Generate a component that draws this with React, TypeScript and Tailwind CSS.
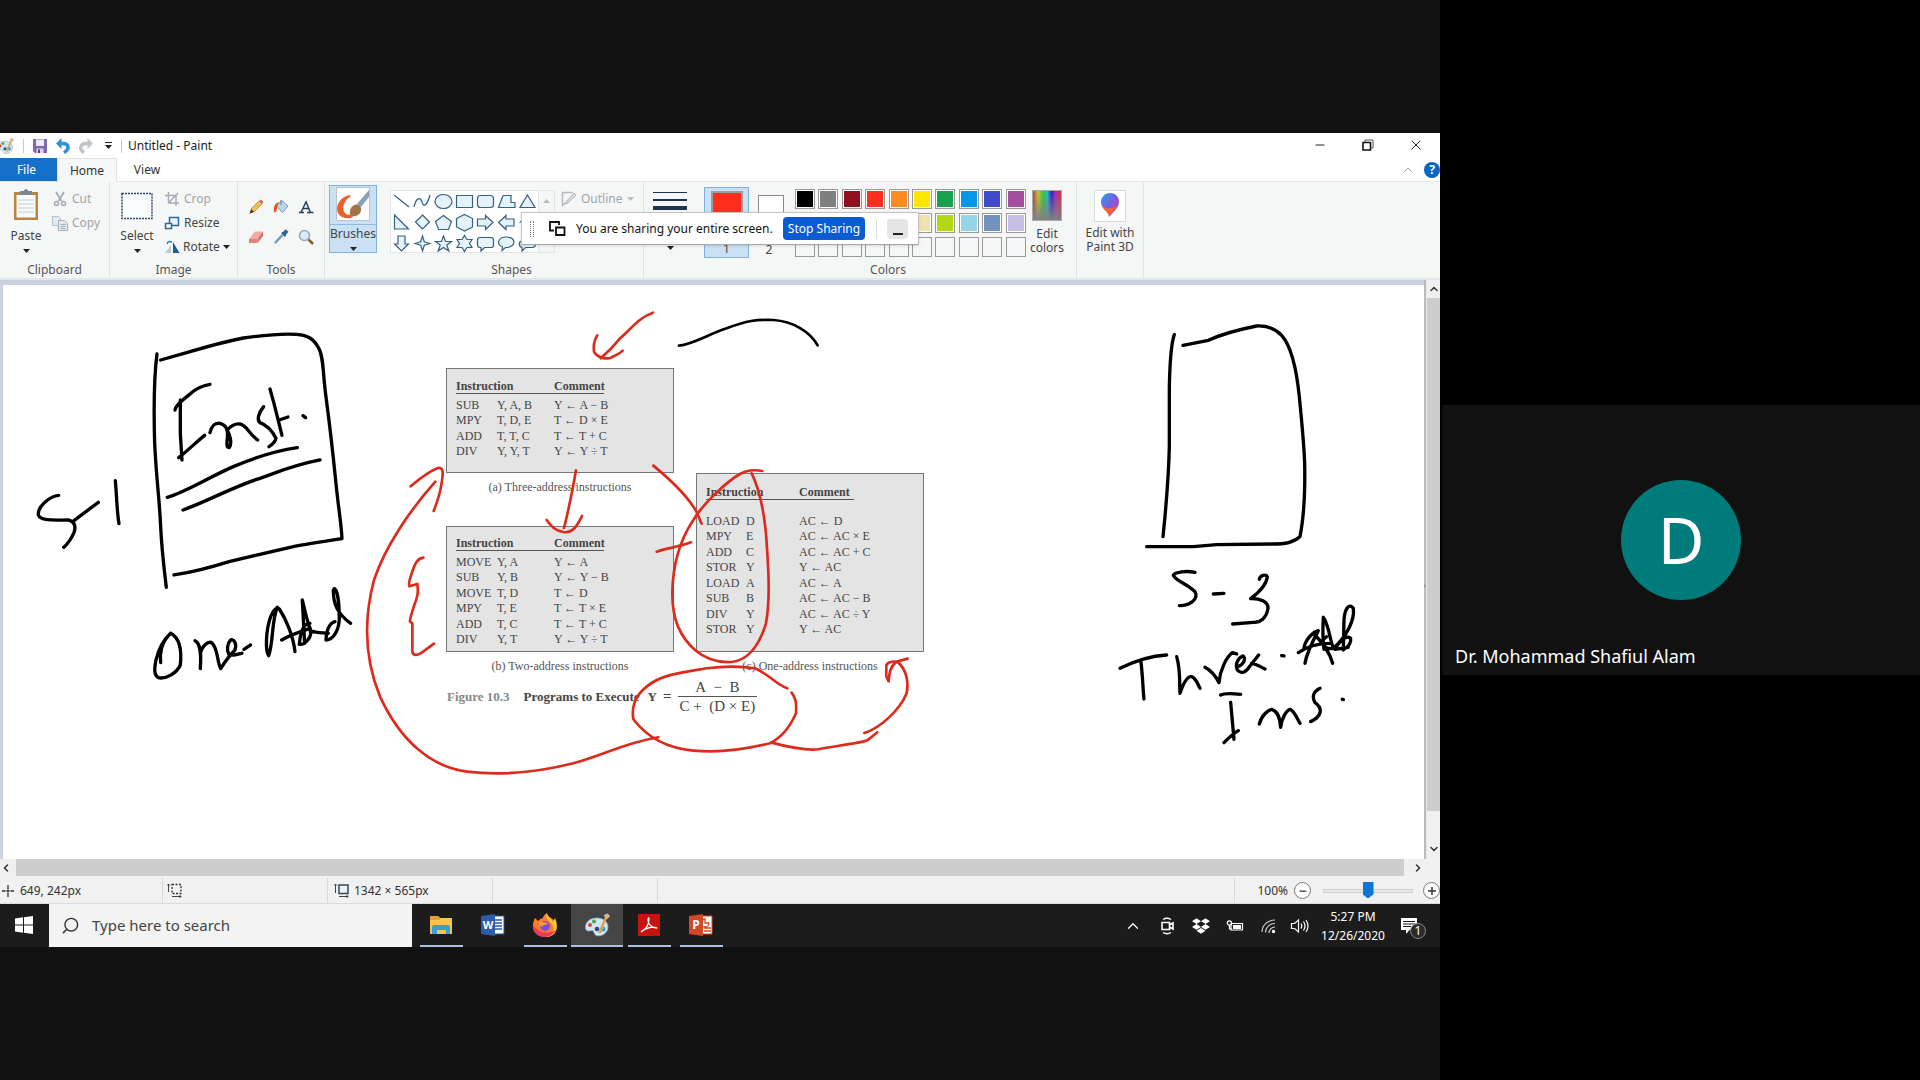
import type { ReactNode } from "react";
import { Minus, X, ChevronUp, ChevronDown, ChevronLeft, ChevronRight, Search } from "lucide-react";
import { FaDropbox } from "react-icons/fa";

/* ---------- small shared pieces ---------- */

const Caret = ({ className = "" }: { className?: string }) => (
  <svg viewBox="0 0 7 4" className={`h-1 w-[7px] ${className}`} aria-hidden="true">
    <path d="M0 0H7L3.5 4Z" fill="currentColor" />
  </svg>
);

const Icon = ({ size = "size-4", box = "0 0 16 16", children }: { size?: string; box?: string; children: ReactNode }) => (
  <svg viewBox={box} className={`${size} shrink-0`} fill="none" aria-hidden="true">
    {children}
  </svg>
);

const Palette = ({ size }: { size: string }) => (
  <Icon size={size} box="0 0 26 26">
    <path d="M13 6C5 6 1 11 1.500 16c.5 4 4 3 6 2.500 2.500-.5 2 2.500 4 4.500 2.500 2 9 .5 11.500-4C26 13 22 6 13 6Z" fill="#cfe6f3" stroke="#7fb0cf" strokeWidth=".8" />
    <circle cx="6" cy="13" r="2" fill="#d8433b" />
    <circle cx="10" cy="9.500" r="2" fill="#49a54d" />
    <circle cx="13" cy="17" r="2.300" fill="#2b4f7a" />
    <circle cx="19" cy="17" r="2.500" fill="#3aa0dc" />
    <path d="M14 21 21 5l2 1-6 15Z" fill="#e0a04a" />
    <path d="M19.500 3 24 1.500l2 3-3.500 3Z" fill="#d9b58a" />
  </Icon>
);

/* ---------- title bar ---------- */

function TitleBar() {
  return (
    <header className="flex h-[25px] items-center bg-white text-[#222]">
      <div className="w-[15px] overflow-hidden">
        <div className="-ml-1"><Palette size="size-[18px]" /></div>
      </div>
      <span className="ml-2 h-3.5 w-px bg-[#c8c8c8]" />
      <div className="ml-2 flex items-center gap-[7px]">
        <button aria-label="Save">
          <Icon>
            <path d="M1 1h14v14H3l-2-2Z" fill="#8068b0" />
            <path d="M4 1.500h8V8H4Z" fill="#eceaf5" />
            <path d="M4.500 10.500h7V15h-7Z" fill="#d9d6ea" />
            <path d="M6 11.500h2V15H6Z" fill="#51407c" />
          </Icon>
        </button>
        <button aria-label="Undo">
          <Icon>
            <path d="M3 5.500h5c6 0 7 6 1 9" stroke="#2a93dc" strokeWidth="3.500" />
            <path d="M1 5.500 6.500 0v11Z" fill="#2a93dc" />
          </Icon>
        </button>
        <button aria-label="Redo">
          <Icon>
            <path d="M13 5.500H8c-6 0-7 6-2 9" stroke="#bfc4c9" strokeWidth="3.500" />
            <path d="M15 5.500 9.500 0v11Z" fill="#bfc4c9" />
          </Icon>
        </button>
        <button aria-label="Customize Quick Access Toolbar" className="flex w-3.5 flex-col items-center gap-0.5">
          <span className="h-px w-[7px] bg-[#222]" />
          <Caret />
        </button>
      </div>
      <span className="ml-1.5 h-3.5 w-px bg-[#c8c8c8]" />
      <h1 className="ml-1.5 text-xs">Untitled - Paint</h1>
      <div className="ml-auto flex items-center pb-0.5">
        <button aria-label="Minimize" className="flex w-12 justify-center"><Minus className="size-3.5" /></button>
        <button aria-label="Restore" className="flex w-12 justify-center">
          <Icon size="size-3" box="0 0 12 12">
            <path d="M3 3V1h8v8H9.500" stroke="#555" />
            <path d="M1 3.500h7.500v7.500H1Z" stroke="#111" strokeWidth="1.600" />
          </Icon>
        </button>
        <button aria-label="Close" className="flex w-12 justify-center"><X className="size-4" strokeWidth={1.5} /></button>
      </div>
    </header>
  );
}

function Tabs() {
  return (
    <nav className="flex h-6 items-stretch border-b border-[#e6e8ea] bg-white text-xs text-[#333]" aria-label="Ribbon tabs">
      <button className="w-[57px] bg-[#1470c8] pr-1 text-white">File</button>
      <button className="-mb-px w-[60px] border-x border-t border-[#e0e3e6] bg-[#f6f7f8]">Home</button>
      <button className="w-[60px]">View</button>
      <div className="ml-auto flex items-center gap-2">
        <button aria-label="Minimize the Ribbon"><ChevronUp className="size-4 text-[#aaa]" strokeWidth={1.5} /></button>
        <button aria-label="Help" className="flex size-4 items-center justify-center rounded-full bg-[#0a66c2] text-xs font-bold leading-none text-white">?</button>
      </div>
    </nav>
  );
}

/* ---------- ribbon ---------- */

const Group = ({ label, width, children, line = true }: { label: string; width: string; children: ReactNode; line?: boolean }) => (
  <section className={`flex shrink-0 flex-col ${width} ${line ? "border-r border-[#e0e3e6]" : ""}`}>
    <div className="flex flex-1 pt-[5px]">{children}</div>
    <div className="h-4 text-center text-xs leading-4 text-[#555]">{label}</div>
  </section>
);

const toolIcons: { name: string; art: ReactNode }[] = [
  { name: "Pencil", art: <><path d="m3 10 8-8 3 3-8 8Z" fill="#f0bf55" stroke="#a97a2a" strokeWidth=".7" /><path d="m3 10 3 3-4.500 1.800Z" fill="#4b3a26" /><path d="m11 2 2-1.500 2.500 2.500L14 5Z" fill="#d96a62" /></> },
  { name: "Fill with color", art: <><path d="m3.500 7 5-5.500L15 7l-5.500 6.500Z" fill="#b9d6ea" stroke="#5a86a8" strokeWidth=".8" /><path d="M8 6V1" stroke="#5a86a8" /><path d="M6 3.500C2 4 .5 7 1 13c2 1 3-1 3-5Z" fill="#e2532c" /></> },
  { name: "Text", art: <path d="M1 13.500h5M9 13.500h6.500M3.200 13 8.200 2.500M7.700 2l4.800 11.500M5 9.500h5.500" stroke="#23405f" strokeWidth="1.500" /> },
  { name: "Eraser", art: <><path d="m1 10 6-7.500h8L9.500 10Z" fill="#f1a9a0" /><path d="M1 10h8.500v4H1Z" fill="#e0857d" /><path d="m9.500 10 5.500-7.500V7l-5.500 7Z" fill="#cf6f69" /></> },
  { name: "Color picker", art: <><path d="m2 14 7.500-8" stroke="#6c9cc4" strokeWidth="2.500" /><path d="M9 3.500 12.500 7" stroke="#1c3f66" strokeWidth="2" /><path d="m10.500 5.500 3.500-4" stroke="#2468a6" strokeWidth="4" /></> },
  { name: "Magnifier", art: <><circle cx="6.500" cy="6.500" r="5" fill="#dcecf7" stroke="#93a9ba" strokeWidth="1.500" /><path d="m10.500 10.500 4.500 4.500" stroke="#8a5a2b" strokeWidth="2.500" /></> },
];

const shapes: { name: string; d: string }[] = [
  { name: "Line", d: "M3 4 18 16" },
  { name: "Curve", d: "M2 16C4 6 9 6 10 11s5 5 8-7" },
  { name: "Oval", d: "M2 10.500a8.500 7 0 1 0 17 0a8.500 7 0 1 0-17 0" },
  { name: "Rectangle", d: "M2.500 4.500h16v12h-16Z" },
  { name: "Rounded rectangle", d: "M5.500 4.500h10q3 0 3 3v6q0 3-3 3h-10q-3 0-3-3v-6q0-3 3-3Z" },
  { name: "Polygon", d: "M7 4.500h8v7h4v5H2.500L7 4.500" },
  { name: "Triangle", d: "M10.500 4 18 16.500H3Z" },
  { name: "Right triangle", d: "M3.500 3v14h14Z" },
  { name: "Diamond", d: "m10.500 3 7 7-7 7-7-7Z" },
  { name: "Pentagon", d: "m10.500 3.500 8 6-3 8h-10l-3-8Z" },
  { name: "Hexagon", d: "m10.500 2.500 8 4v8.500l-8 4-8-4V6.500Z" },
  { name: "Right arrow", d: "M2.500 7h8V3.500l7.500 7-7.500 7V14h-8Z" },
  { name: "Left arrow", d: "M18 7h-8V3.500l-7.500 7 7.500 7V14h8Z" },
  { name: "Up arrow", d: "M7 18v-8H3.500l7-7.500 7 7.500H14v8Z" },
  { name: "Down arrow", d: "M7 3v8H3.500l7 7 7-7H14V3Z" },
  { name: "Four-point star", d: "m10.500 3 1.800 5.700 5.700 1.800-5.700 1.800-1.800 5.700-1.800-5.700L3 10.500l5.700-1.800Z" },
  { name: "Five-point star", d: "m10.500 3 2 5.500h6l-4.700 3.500 2 6-5.300-3.500L5.200 18l2-6L2.500 8.500h6Z" },
  { name: "Six-point star", d: "m10.500 2.500 2.500 4h5l-2.500 4 2.500 4h-5l-2.500 4-2.500-4H3l2.500-4L3 6.500h5Z" },
  { name: "Rounded callout", d: "M5 4.500h11q2.500 0 2.500 2.500v5q0 2.500-2.500 2.500H9.500L6 18v-3.500H5Q2.500 14.500 2.500 12V7Q2.500 4.500 5 4.500Z" },
  { name: "Oval callout", d: "M6 17.500 6.500 14C0 11 2 4 10.500 4s10.500 8 1.500 10.500H9.500Z" },
  { name: "Cloud callout", d: "M5 14.500C1 13 2 8 5 8c0-5 8-5 9-2 5 0 6 7 2 8.500H8.500L5 18Z" },
];

const palette = [
  "bg-black", "bg-[#7f7f7f]", "bg-[#930f1e]", "bg-[#ff2f20]", "bg-[#ff8a20]", "bg-[#ffe500]", "bg-[#18a04c]", "bg-[#0596e8]", "bg-[#3f4acb]", "bg-[#a34fa0]",
  "bg-white", "bg-[#c3c3c3]", "bg-[#b97a57]", "bg-[#ffaec9]", "bg-[#ffc90e]", "bg-[#efe2ac]", "bg-[#b2d816]", "bg-[#95d5e6]", "bg-[#7092be]", "bg-[#c8bfe7]",
  "bg-[#f5f6f7]", "bg-[#f5f6f7]", "bg-[#f5f6f7]", "bg-[#f5f6f7]", "bg-[#f5f6f7]", "bg-[#f5f6f7]", "bg-[#f5f6f7]", "bg-[#f5f6f7]", "bg-[#f5f6f7]", "bg-[#f5f6f7]",
];

function Ribbon() {
  return (
    <div className="relative flex h-[98px] overflow-hidden border-b-2 border-[#e4e8ec] bg-[#f5f7f7] text-xs leading-[14px] text-[#444]">
      <Group label="Clipboard" width="w-[110px]">
        <button className="flex w-[52px] flex-col items-center">
          <Icon size="h-9 w-7" box="0 0 28 36">
            <path d="M2 5h24v28H2Z" fill="#b98543" />
            <path d="M4.500 8h19v22.500h-19Z" fill="#f7fafc" />
            <path d="M6 13h16M6 17h16M6 21h16M6 25h16" stroke="#c3d0da" />
            <path d="M8 4h3.500q2.500-4 5 0H20v4H8Z" fill="#7a8690" />
          </Icon>
          <span className="mt-1.5">Paste</span>
          <Caret className="mt-1.5 text-[#222]" />
        </button>
        <div className="flex flex-col gap-2 pt-1 text-[#a0a4a8]">
          <button className="flex h-4 items-center gap-1">
            <Icon><path d="M4 1l5.500 9M12 1 6.500 10" stroke="#a3adb8" strokeWidth="1.800" /><circle cx="4.500" cy="12.500" r="2" stroke="#a3adb8" strokeWidth="1.500" /><circle cx="11.500" cy="12.500" r="2" stroke="#a3adb8" strokeWidth="1.500" /></Icon>
            Cut
          </button>
          <button className="flex h-4 items-center gap-1">
            <Icon><path d="M.5 1.500h6l2 2v7h-8Z" fill="#e3ebf2" stroke="#b4c0cb" /><path d="M6.500 5.500h6l3 3v7h-9Z" fill="#e3ebf2" stroke="#a3b1bf" /><path d="M8.500 9.500h5m-5 2h5m-5 2h5" stroke="#a3b1bf" /></Icon>
            Copy
          </button>
        </div>
      </Group>

      <Group label="Image" width="w-32">
        <button className="flex w-[54px] flex-col items-center">
          <Icon size="h-9 w-8" box="0 0 32 36">
            <path d="M1 6.500h30v25H1Z" fill="#f9fcfe" stroke="#2f4964" strokeDasharray="2 1" strokeWidth="1.500" />
          </Icon>
          <span className="mt-1.5">Select</span>
          <Caret className="mt-1.5 text-[#222]" />
        </button>
        <div className="flex flex-col gap-2 pt-1">
          <button className="flex h-4 items-center gap-1 text-[#a0a4a8]">
            <Icon><path d="M4.500 1v11H15M1 4.500h11V15M5 11.500 14 2" stroke="#a3adb8" strokeWidth="1.500" /></Icon>
            Crop
          </button>
          <button className="flex h-4 items-center gap-1">
            <Icon><path d="M5.500 2.500h9v8h-9Z" fill="#e8f3fb" stroke="#2d6792" strokeWidth="1.500" /><path d="M1.500 8.500h6v5h-6Z" fill="#fff" stroke="#2d6792" strokeWidth="1.500" /></Icon>
            Resize
          </button>
          <button className="flex h-4 items-center gap-[3px]">
            <Icon><path d="M1 14h6V6Z" fill="#b5cbdc" /><path d="M9 14h6.500L9 3Z" fill="#1f5f8f" /><path d="M3 5c1-3 3-3 5-2" stroke="#2d84c0" strokeWidth="1.500" /></Icon>
            Rotate <Caret className="text-[#222]" />
          </button>
        </div>
      </Group>

      <Group label="Tools" width="w-[87px]">
        <div className="mx-auto mt-3 grid grid-cols-3 content-start gap-x-[9px] gap-y-3.5">
          {toolIcons.map((t) => (
            <button key={t.name} aria-label={t.name}><Icon>{t.art}</Icon></button>
          ))}
        </div>
      </Group>

      <Group label="" width="w-[55px]" line={false}>
        <button className="-mt-0.5 ml-1 flex h-[68px] w-12 flex-col items-center border border-[#7fb2de] bg-[#c9e0f5] pt-px">
          <Icon size="size-[34px]" box="0 0 34 34">
            <path d="M.5.5h33v33H.5Z" fill="#fff" stroke="#b8c4cf" />
            <path d="M13 8C1 11-3 25 6 30c7 3 12 1 15-6-3 3-8 5-11 3-5-4-3-13 5-18Z" fill="#e9602f" />
            <path d="M14 24c1-6 7-8 10-5s0 10-5 10c-4 0-6-1-5-5Z" fill="#a07648" />
            <path d="m21 17 12-14v7l-8 10Z" fill="#8ca0b5" />
          </Icon>
          <span className="mt-[3px] w-full border-t border-[#8fbde3] pt-0.5 text-center leading-[14px]">Brushes</span>
          <Caret className="mt-1.5 text-[#222]" />
        </button>
      </Group>

      <Group label="Shapes" width="w-[264px]">
        <div className="ml-2.5 mt-[3px] flex h-[63px] border border-[#e1e5e9] bg-white">
          <div className="grid grid-cols-[repeat(7,21px)] grid-rows-[repeat(3,21px)]">
            {shapes.map((s) => (
              <button key={s.name} aria-label={s.name}>
                <Icon size="size-[21px]" box="0 0 21 21"><path d={s.d} fill="#e4f2fa" stroke="#35607f" strokeWidth="1.200" /></Icon>
              </button>
            ))}
          </div>
          <div className="flex w-4 justify-center border-l border-[#e1e5e9] bg-[#f5f7f7] pt-2">
            <Caret className="rotate-180 text-[#b8bcc0]" />
          </div>
        </div>
        <button className="ml-1.5 mt-1 flex h-4 items-center gap-1 text-[#a0a4a8]">
          <Icon><path d="M12 1.500H1.500v13L14 3" stroke="#b6bcc2" strokeWidth="1.500" /><path d="m5 11 8-9 2 2-8 8-3 1Z" fill="#d5dade" stroke="#b6bcc2" /></Icon>
          Outline <Caret className="text-[#b8bcc0]" />
        </button>
      </Group>

      <section className="flex w-14 shrink-0 flex-col items-center pr-1 pt-2.5">
        <button aria-label="Size" className="flex h-[58px] w-[34px] flex-col">
          <span className="h-px w-full bg-[#1f3450]" />
          <span className="mt-1.5 h-0.5 w-full bg-[#1f3450]" />
          <span className="mt-[5px] h-1 w-full bg-[#1f3450]" />
          <Caret className="mx-auto mt-auto text-[#222]" />
        </button>
      </section>

      <Group label="Colors" width="w-[377px]">
        <button aria-label="Color 1" className="ml-1 flex h-[71px] w-[45px] flex-col items-center justify-between border border-[#7fb2de] bg-[#c9e0f5] pb-px pt-[3px]">
          <span className="size-8 border-2 border-[#9c9ca0] bg-[#ff2f20]" />
          <span>1</span>
        </button>
        <button aria-label="Color 2" className="ml-2 flex h-[70px] w-7 flex-col items-center justify-between pt-2">
          <span className="size-[26px] border border-[#8a8a8a] bg-white" />
          <span className="pr-1">2</span>
        </button>
        <div className="ml-2.5 mt-0.5 grid w-[234px] grid-cols-10 content-start gap-y-1">
          {palette.map((c, i) => (
            <button key={i} aria-label={`Palette color ${i + 1}`} className={`size-5 border border-[#9a9a9a] p-px ${i > 19 ? "bg-[#f5f7f7]" : "bg-white"}`}>
              <span className={`block size-full ${c}`} />
            </button>
          ))}
        </div>
        <button className="-ml-0.5 flex w-10 flex-col items-center pt-[3px]">
          <span className="relative h-[31px] w-[30px] overflow-hidden border border-[#aaa] bg-[linear-gradient(90deg,#c33,#cc3_18%,#3c3_36%,#2bc_52%,#22c_66%,#b2b_82%,#c33)]">
            <span className="block size-full bg-linear-to-b from-transparent to-[#808080]" />
          </span>
          <span className="mt-1.5">Edit<br />colors</span>
        </button>
      </Group>

      <section className="flex w-[67px] shrink-0 justify-center border-r border-[#e0e3e6] pt-2">
        <button className="flex w-16 flex-col items-center whitespace-nowrap">
          <Icon size="size-8" box="0 0 32 32">
            <defs>
              <linearGradient id="drop" x1="0" y1="0" x2="1" y2="1">
                <stop offset="0" stopColor="#22a7e8" /><stop offset=".5" stopColor="#7d5be0" /><stop offset="1" stopColor="#e93f6f" />
              </linearGradient>
            </defs>
            <path d="M.5.5h31v31H.5Z" fill="#fff" stroke="#d5dadf" />
            <path d="M16 3c6 0 9 4 9 9 0 6-6 10-10 15 0-6-8-8-8-15 0-5 4-9 9-9Z" fill="url(#drop)" />
            <path d="M8 16c2 5 7 6 7 11 3-5 6-7 8-11-5 3-10 3-15 0Z" fill="#f0623f" />
          </Icon>
          <span className="mt-1">Edit with<br />Paint 3D</span>
        </button>
      </section>

      <div role="status" className="absolute left-[521px] top-[30px] flex h-[33px] w-[398px] items-center border border-[#c4c4c4] border-b-[#a8a8a8] bg-white pl-2 text-xs text-[#111] shadow-sm">
        <span className="h-4 w-1 border-x border-dotted border-[#777]" />
        <Icon size="ml-3.5 size-[18px]" box="0 0 18 18">
          <path d="M6 10.500H2V2h9v3" stroke="#111" strokeWidth="1.800" />
          <path d="M8 7.500h8.500V15H8Z" stroke="#111" strokeWidth="1.800" />
        </Icon>
        <span className="ml-2.5 w-[207px] whitespace-nowrap">You are sharing your entire screen.</span>
        <button className="h-[23px] w-[82px] whitespace-nowrap rounded bg-[#0b5bd3] text-white">Stop Sharing</button>
        <span className="ml-[11px] h-5 w-px bg-[#ddd]" />
        <button aria-label="Hide sharing bar" className="ml-2.5 flex h-5 w-[21px] items-end justify-center rounded bg-[#e3e5e6] pb-1">
          <span className="h-0.5 w-2.5 bg-[#222]" />
        </button>
      </div>
    </div>
  );
}

/* ---------- canvas content ---------- */

type Row = [string, string, string];

const threeAddress: Row[] = [
  ["SUB", "Y, A, B", "Y ← A − B"],
  ["MPY", "T, D, E", "T ← D × E"],
  ["ADD", "T, T, C", "T ← T + C"],
  ["DIV", "Y, Y, T", "Y ← Y ÷ T"],
];
const twoAddress: Row[] = [
  ["MOVE", "Y, A", "Y ← A"],
  ["SUB", "Y, B", "Y ← Y − B"],
  ["MOVE", "T, D", "T ← D"],
  ["MPY", "T, E", "T ← T × E"],
  ["ADD", "T, C", "T ← T + C"],
  ["DIV", "Y, T", "Y ← Y ÷ T"],
];
const oneAddress: Row[] = [
  ["LOAD", "D", "AC ← D"],
  ["MPY", "E", "AC ← AC × E"],
  ["ADD", "C", "AC ← AC + C"],
  ["STOR", "Y", "Y ← AC"],
  ["LOAD", "A", "AC ← A"],
  ["SUB", "B", "AC ← AC − B"],
  ["DIV", "Y", "AC ← AC ÷ Y"],
  ["STOR", "Y", "Y ← AC"],
];

function Listing({ place, box, gap, cols, rows, caption }: { place: string; box: string; gap: string; cols: [string, string, string]; rows: Row[]; caption: string }) {
  return (
    <figure className={`absolute w-[228px] ${place}`}>
      <div className={`border border-[#777] bg-[#e4e4e4] pl-[9px] ${box}`}>
        <table className="w-[148px] table-fixed whitespace-nowrap text-left text-xs leading-[15px]">
          <colgroup><col className={cols[0]} /><col className={cols[1]} /><col className={cols[2]} /></colgroup>
          <thead>
            <tr className="border-b border-[#555]">
              <th colSpan={2} className="leading-[14px]">Instruction</th>
              <th className="leading-[14px]">Comment</th>
            </tr>
          </thead>
          <tbody className={`before:block before:content-[''] ${gap}`}>
            {rows.map((r, i) => (
              <tr key={i} className="odd:h-4 even:h-[15px]">
                <td>{r[0]}</td><td>{r[1]}</td><td>{r[2]}</td>
              </tr>
            ))}
          </tbody>
        </table>
      </div>
      <figcaption className="mt-[7px] text-center text-xs leading-[15px] text-[#555]">{caption}</figcaption>
    </figure>
  );
}

const leftInk = [
  "M471 132C462 200 462 330 464 400C470 520 478 560 482 650C486 730 494 790 499 832",
  "M482 150L560 128C640 104 690 92 730 84C800 74 850 70 890 73C925 76 940 86 955 112C972 140 968 190 978 260C990 350 1000 440 1008 520C1016 600 1024 640 1026 686C960 696 920 702 880 710C800 728 740 742 690 754C620 776 580 786 522 795",
  "M630 223C600 228 585 238 570 252C550 270 528 282 525 300M541 270L541 370L546 450M536 443C560 425 590 395 614 376",
  "M630 368C636 345 645 338 660 340C680 345 684 360 682 385C680 405 680 412 688 413C697 400 690 375 682 360C695 345 705 340 720 342C740 345 745 370 773 390",
  "M791 290C775 310 770 330 780 338C800 345 815 360 828 385C826 398 815 405 807 410M810 237L822 280L832 320L846 376M838 330L864 321M909 317L917 323",
  "M502 562C560 545 620 505 700 470C770 440 830 422 892 413M549 600C620 575 700 530 780 505C850 480 880 466 960 450",
  "M176 556C150 558 112 590 115 615C122 635 170 630 205 630C225 635 228 650 222 668C212 690 200 705 191 712M222 632L295 577M346 512C350 550 350 600 357 641",
  "M482 1058C478 1030 485 995 512 970C540 985 546 1020 541 1065C530 1090 500 1106 478 1104C462 1098 462 1080 468 1050C478 1010 495 985 512 970",
  "M585 992C602 1000 604 1030 601 1076M601 1030C605 1010 625 990 637 1000C655 1020 650 1050 662 1076C672 1060 685 1040 705 1020C712 1000 700 985 692 990C682 1000 680 1020 686 1032C700 1040 712 1032 726 1030M732 1018L752 1005",
  "M806 1037C795 1020 798 960 812 920C820 900 830 890 838 897C860 930 880 980 885 1025M806 1037C820 1000 815 930 832 892M845 990C870 975 900 965 930 955",
  "M907 870C912 890 920 930 930 955C940 980 915 1005 898 1003C900 980 905 940 930 940M907 870L914 1000M930 962C950 970 970 968 985 970",
  "M1003 836C1015 840 1018 900 1018 930C1015 970 995 990 978 990C978 970 985 940 1005 935M1000 840C1000 880 1010 910 1052 940",
];

const rightInk = [
  "M223 74C210 110 210 170 208 230L208 410C206 500 200 560 195 620L189 680",
  "M249 106L325 91C370 70 420 58 470 48C510 46 530 60 545 76C575 110 590 180 598 260C606 340 612 400 614 460C616 560 610 630 600 680C580 700 550 702 520 702L350 704L280 710L140 710",
  "M285 787C260 782 225 785 220 796C225 812 260 820 285 845C298 870 265 888 238 887M340 852L372 850M478 808C480 795 498 792 502 800C500 825 480 845 452 866C480 865 505 875 504 895C500 925 480 938 460 937L398 942",
  "M60 1075C110 1050 150 1038 200 1035M122 1050C128 1090 128 1130 132 1167M230 1040C242 1080 238 1120 240 1150C250 1120 262 1098 275 1100C288 1105 292 1120 300 1135",
  "M315 1072C330 1080 345 1095 357 1118C360 1080 380 1040 397 1028L410 1032M410 1072C440 1060 435 1040 428 1038C412 1045 405 1065 412 1080C425 1095 440 1085 450 1068L476 1035M455 1060C470 1062 480 1070 495 1077M545 1037L552 1038",
  "M595 1028C620 1010 650 1000 690 1000M615 1060C620 1030 640 990 655 962C640 965 615 990 612 1015M640 970C670 1000 690 1030 698 1060M670 922C668 960 668 990 672 1018M670 922C685 940 690 990 700 1015C680 1020 650 1000 680 980",
  "M700 1015C740 980 765 930 760 895C750 880 735 890 732 930L730 1020C745 1010 755 1000 752 985C740 975 720 990 705 1018L745 1012",
  "M362 1155C375 1148 395 1150 422 1153M392 1177L402 1288M372 1298C385 1285 400 1270 415 1262M478 1242C485 1215 505 1200 515 1198C535 1205 540 1225 542 1252C545 1225 560 1200 570 1198C585 1205 590 1225 600 1240M660 1135C640 1145 635 1160 645 1178C670 1195 665 1220 632 1235M727 1168L730 1169",
];

const redInk = [
  "M39 38C0 50-30 90-60 115C-80 140-100 160-118 175M-128 106C-140 125-140 140-138 155C-130 172-100 180-85 172C-70 165-60 160-52 152",
  "M-192 511C-200 560-212 620-228 684M-280 660C-265 680-255 692-230 696C-200 702-185 670-174 648",
  "M40 497C80 530 130 575 160 620C175 640 178 660 185 671M50 755C80 745 120 740 153 727",
  "M-614 545C-690 630-765 740-798 840C-830 960-825 1080-780 1190C-720 1320-630 1400-520 1415C-410 1428-310 1418-200 1390C-100 1362-50 1330 55 1312",
  "M-688 559C-660 535-635 515-607 504C-585 500-592 530-597 560C-602 590-610 610-619 633",
  "M-650 773C-668 775-675 790-685 820C-692 840-695 855-692 859L-668 852C-664 880-668 890-677 915C-685 940-692 960-690 965L-683 970L-683 1055C-680 1070-665 1065-655 1058L-618 1031",
  "M367 513C340 508 320 510 300 522C260 545 190 610 160 660C120 720 98 800 97 880C97 960 120 1010 165 1050C200 1080 240 1088 275 1086C330 1080 360 1030 378 970C392 890 385 800 378 700C370 620 355 560 335 520",
  "M442 1165C410 1155 390 1125 345 1105C300 1098 240 1100 200 1105C120 1118 60 1125 20 1160C-20 1190-25 1230-20 1258C20 1310 80 1345 160 1352C240 1360 330 1345 390 1330C430 1310 455 1270 468 1240C470 1210 468 1195 455 1178",
  "M395 1328C440 1340 500 1352 535 1348C590 1338 640 1332 680 1322C695 1312 705 1302 712 1297M673 1299C720 1285 780 1230 800 1180C808 1140 795 1105 775 1088C765 1082 745 1085 739 1095L739 1130L746 1144C748 1120 750 1100 770 1085L803 1076",
];

function Ink() {
  return (
    <svg
      viewBox="3 285 1421 574"
      className="pointer-events-none absolute left-0 top-0 h-[574px] w-[1421px]"
      fill="none"
      strokeLinecap="round"
      strokeLinejoin="round"
      role="img"
      aria-label="Freehand pen strokes: Inst., S-1, One-Add, S-3, Three-Add Ins."
    >
      <g stroke="#000" strokeWidth="10">
        <g transform="translate(0 310) scale(.3333)">{leftInk.map((d) => <path key={d} d={d} />)}</g>
        <g transform="translate(1100 310) scale(.3333)">{rightInk.map((d) => <path key={d} d={d} />)}</g>
        <g transform="translate(640 300) scale(.3333)"><path d="M117 137C160 132 200 105 260 85C320 62 350 58 400 60C460 64 510 95 533 136" strokeWidth="8" /></g>
      </g>
      <g transform="translate(640 300) scale(.3333)" stroke="#dc2a1c" strokeWidth="8">
        {redInk.map((d) => <path key={d} d={d} />)}
      </g>
    </svg>
  );
}

function Workspace() {
  return (
    <div className="flex h-[579px] bg-[#c8d3df]">
      <main className="relative ml-[3px] mt-[5px] flex-1 overflow-hidden bg-white font-['Liberation_Serif',serif] text-[#444]">
        <Listing place="left-[443px] top-[83px]" box="h-[105px] pt-[10px]" gap="before:h-[3px]" cols={["w-[41px]", "w-[57px]", "w-[50px]"]} rows={threeAddress} caption="(a) Three-address instructions" />
        <Listing place="left-[443px] top-[241px]" box="h-[126px] pt-[9px]" gap="before:h-[3px]" cols={["w-[41px]", "w-[57px]", "w-[50px]"]} rows={twoAddress} caption="(b) Two-address instructions" />
        <Listing place="left-[693px] top-[188px]" box="h-[179px] pt-[11px]" gap="before:h-[13px]" cols={["w-10", "w-[53px]", "w-[55px]"]} rows={oneAddress} caption="(c) One-address instructions" />
        <div className="absolute left-[444px] top-[393px] flex items-center whitespace-nowrap text-[13px] font-bold">
          <span className="text-[#888]">Figure 10.3</span>
          <span className="ml-3.5">Programs to Execute</span>
          <span className="ml-2">Y</span>
          <span className="ml-1.5 text-[15px]">=</span>
          <span className="ml-1.5 flex flex-col items-stretch text-center text-[15px] font-normal leading-[18px]">
            <span className="border-b border-[#555]">A&nbsp; −&nbsp; B</span>
            <span className="px-0.5">C +&nbsp; (D × E)</span>
          </span>
        </div>
        <Ink />
      </main>
      <div className="flex w-[3px] items-center border-r border-[#e8e8e8] bg-[#b8bcc0]">
        <span className="mt-8 size-1 rounded-full border border-[#999] bg-white" />
      </div>
      <div className="flex w-[13px] flex-col items-center bg-[#f0f0f0]">
        <button aria-label="Scroll up" className="flex h-[18px] items-center"><ChevronUp className="size-3 text-[#333]" strokeWidth={3} /></button>
        <div className="h-[513px] w-full bg-[#cdcdcd]" />
        <button aria-label="Scroll down" className="mt-auto flex h-5 items-center"><ChevronDown className="size-3 text-[#333]" strokeWidth={3} /></button>
      </div>
    </div>
  );
}

function HorizontalScroll() {
  return (
    <div className="flex h-[17px] items-center bg-[#f0f0f0]">
      <button aria-label="Scroll left" className="flex w-4 justify-start"><ChevronLeft className="size-3 text-[#333]" strokeWidth={3} /></button>
      <div className="h-full flex-1 bg-[#cdcdcd]" />
      <button aria-label="Scroll right" className="flex w-9 justify-center pr-2"><ChevronRight className="size-3 text-[#333]" strokeWidth={3} /></button>
    </div>
  );
}

function StatusBar() {
  return (
    <footer className="flex h-7 items-center border-b border-[#dcdcdc] bg-[#f1f1f1] pt-0.5 text-xs text-[#333]">
      <div className="flex h-full w-[163px] items-center gap-1.5 border-r border-[#d8d8d8] pl-0.5">
        <Icon size="size-3" box="0 0 12 12"><path d="M6 0v4M6 8v4M0 6h3.500M8.500 6H12M4.500 6h3M6 4.500v3" stroke="#333" strokeWidth="1.300" /></Icon>
        649, 242px
      </div>
      <div className="flex h-full w-[165px] items-center border-r border-[#d8d8d8] pl-1">
        <Icon size="size-4" box="0 0 16 16"><path d="M1.500 1v8M0 2.500 1.500 1 3 2.500M5 13.500h9m-1.500-1.500 1.500 1.500-1.500 1.500" stroke="#444" /><path d="M5 1.500h9v9H5Z" stroke="#333" strokeDasharray="2 1.500" strokeWidth="1.300" /></Icon>
      </div>
      <div className="flex h-full w-[165px] items-center gap-1 border-r border-[#d8d8d8] pl-1.5">
        <Icon size="size-4" box="0 0 16 16"><path d="M1.500 1v9M0 2.500 1.500 1 3 2.500M5 13.500h9m-1.500-1.500 1.500 1.500-1.500 1.500" stroke="#444" /><path d="M5 2h9v8.500H5Z" stroke="#2d4860" strokeWidth="1.500" /></Icon>
        1342 × 565px
      </div>
      <div className="h-full w-[165px] border-r border-[#d8d8d8]" />
      <div className="ml-auto flex h-full w-[206px] items-center border-l border-[#d8d8d8]">
        <label htmlFor="zoom" className="w-[59px] pr-1.5 text-right">100%</label>
        <button aria-label="Zoom out" className="flex size-[17px] items-center justify-center rounded-full border border-[#777] bg-white"><Minus className="size-2.5" strokeWidth={3} /></button>
        <input
          id="zoom"
          type="range"
          defaultValue={50}
          className="ml-3 h-[17px] w-[90px] appearance-none bg-transparent [&::-webkit-slider-runnable-track]:h-1 [&::-webkit-slider-runnable-track]:border [&::-webkit-slider-runnable-track]:border-[#d0d0d0] [&::-webkit-slider-runnable-track]:bg-[#e7e7e7] [&::-webkit-slider-thumb]:-mt-2 [&::-webkit-slider-thumb]:h-[17px] [&::-webkit-slider-thumb]:w-[11px] [&::-webkit-slider-thumb]:appearance-none [&::-webkit-slider-thumb]:bg-[#0b76d8] [&::-webkit-slider-thumb]:[clip-path:polygon(0_0,100%_0,100%_75%,50%_100%,0_75%)]"
        />
        <button aria-label="Zoom in" className="ml-auto flex size-[17px] items-center justify-center rounded-full border border-[#777] bg-white">
          <Icon size="size-2.5" box="0 0 10 10"><path d="M5 1v8M1 5h8" stroke="#333" strokeWidth="1.500" /></Icon>
        </button>
      </div>
    </footer>
  );
}

/* ---------- taskbar ---------- */

const apps: { name: string; running: boolean; wide?: boolean; icon: ReactNode }[] = [
  {
    name: "File Explorer", running: true,
    icon: <Icon size="size-6" box="0 0 24 24"><path d="M1 3h8l2 2h12v16H1Z" fill="#f6c64b" /><path d="M1 3h8l2 2v2H1Z" fill="#e3a02d" /><path d="M3 21v-7q0-2 2-2h14q2 0 2 2v7h-4v-4H8v4Z" fill="#3e9ad8" /></Icon>,
  },
  {
    name: "Word", running: false,
    icon: <Icon size="size-6" box="0 0 24 24"><path d="M11 3h12v18H11Z" fill="#fff" stroke="#2b579a" /><path d="M13 7h8M13 10h8M13 13h8M13 16h8" stroke="#2b579a" strokeWidth="1.300" /><path d="M0 3 14 1v22L0 21Z" fill="#2b5cab" /><text x="7" y="16" fontSize="11" fontWeight="700" textAnchor="middle" fill="#fff">W</text></Icon>,
  },
  {
    name: "Firefox", running: true,
    icon: <Icon size="size-[26px]" box="0 0 26 26"><path d="M3 6 6 9q3-3 5-3c0-2 2-4 4-5 0 4 5 4 8 9 4 7-2 15-10 15S0 19 1 13c0-3 1-5 2-7Z" fill="#ff7b2e" /><path d="M15 1c0 4 4 5 6 9l2-4c4 9 2 19-10 19 8-2 11-9 6-14-3-3-6-5-4-10Z" fill="#ffc931" /><path d="M1 13c0 8 5 12 12 12 5 0 9-3 11-7-6 4-17 4-23-5Z" fill="#f0385a" /><circle cx="13" cy="14" r="5" fill="#7b4fd0" /><path d="M7 10c4-1 6 1 9 1-2 3-5 1-6 4-3-1-3-3-3-5Z" fill="#ff9a35" /></Icon>,
  },
  { name: "Paint", running: true, wide: true, icon: <Palette size="size-[26px]" /> },
  {
    name: "Acrobat Reader", running: true,
    icon: <Icon size="size-[22px]" box="0 0 22 22"><path d="M0 0h22v22H0Z" fill="#c5130d" /><path d="M3 18c5-2 8-8 8-13q0-2-1 0c0 6 4 9 9 9-4-2-12 0-16 4Z" stroke="#fff" strokeWidth="1.300" /></Icon>,
  },
  {
    name: "PowerPoint", running: true,
    icon: <Icon size="size-6" box="0 0 24 24"><path d="M11 3h12v18H11Z" fill="#fff" stroke="#d24726" /><path d="M16 6v4h4a4 4 0 1 1-4-4ZM15 15h7M15 18h7" stroke="#d24726" strokeWidth="1.300" /><path d="M0 3 14 1v22L0 21Z" fill="#d24726" /><text x="7" y="16" fontSize="12" fontWeight="700" textAnchor="middle" fill="#fff">P</text></Icon>,
  },
];

function Taskbar() {
  return (
    <div className="flex h-[43px] bg-[#1c1c1c] text-white">
      <button aria-label="Start" className="flex w-[49px] items-center justify-center pb-px pr-0.5">
        <Icon size="size-[18px]" box="0 0 18 18"><path d="M0 2.500 8 1.300V8.500H0ZM9 1.200 18 0v8.500H9ZM0 9.500h8v7.200L0 15.500ZM9 9.500h9V18L9 16.800Z" fill="#fff" /></Icon>
      </button>
      <form className="flex w-[363px] items-center bg-[#f3f3f3] pl-3" onSubmit={(e) => e.preventDefault()}>
        <Search className="size-[19px] -scale-x-100 text-[#333]" strokeWidth={1.8} />
        <input type="search" aria-label="Search" placeholder="Type here to search" className="ml-3 w-72 bg-transparent text-[15px] text-[#333] outline-none placeholder:text-[#444]" />
      </form>
      <nav className="ml-[3px] flex" aria-label="Running apps">
        {apps.map((a) => (
          <button key={a.name} aria-label={a.name} className={`flex w-[52px] flex-col items-center ${a.wide ? "bg-[#454545]" : ""}`}>
            <span className="flex flex-1 items-center">{a.icon}</span>
            <span className={`h-0.5 ${a.wide ? "w-full" : "w-[43px]"} ${a.running ? "bg-[#a9bfe6]" : ""}`} />
          </button>
        ))}
      </nav>
      <div className="ml-auto flex items-center gap-4 pr-3.5">
        <button aria-label="Show hidden icons"><ChevronUp className="size-[18px]" strokeWidth={1.6} /></button>
        <Icon size="size-[18px]" box="0 0 18 18"><path d="M5 2.500q4-2.500 8 0M5 15.500q4 2.500 8 0" stroke="#fff" strokeWidth="1.300" /><path d="M4 5.500h7.500v7H4ZM11.500 8 15 6v6l-3.500-2" stroke="#fff" strokeWidth="1.600" /></Icon>
        <FaDropbox className="size-[18px]" aria-hidden="true" />
        <Icon size="size-[18px]" box="0 0 18 18"><path d="M5 6.500h11.500v6.500H5Z" stroke="#fff" strokeWidth="1.200" /><path d="M7 8h8v4H7Z" fill="#fff" /><circle cx="3.500" cy="6" r="2.200" stroke="#fff" strokeWidth="1.200" /><path d="M3.500 8v4H6" stroke="#fff" strokeWidth="1.200" /></Icon>
        <Icon size="size-[18px]" box="0 0 18 18"><path d="M2 15C2 8 8 3 15 3M5.500 15.500c0-5 4-9 9.500-9M9 16c0-3 2.500-6 6-6" stroke="#ccc" strokeWidth="1.200" /><circle cx="13.500" cy="14.500" r="1.700" fill="#fff" /></Icon>
        <Icon size="-ml-1 size-5" box="0 0 20 20"><path d="M1.500 7.500h3L8.500 4v12l-4-3.500h-3Z" stroke="#fff" strokeWidth="1.200" /><path d="M11 7.500q1.500 2.500 0 5M13.500 5.500q3 4.500 0 9M16 4q4 6 0 12" stroke="#fff" strokeWidth="1.200" /></Icon>
        <time dateTime="2020-12-26T17:27" className="-ml-2 -mr-1 w-[70px] text-center text-xs leading-[19px]">5:27 PM<br />12/26/2020</time>
        <button aria-label="1 notification" className="relative size-[26px]">
          <Icon size="size-[18px]" box="0 0 18 18"><path d="M1 1h16v12H9.500L6 17v-4H1Z" fill="#fff" /><path d="M3 4.500h12M3 7h12M3 9.500h8" stroke="#1c1c1c" /></Icon>
          <span className="absolute bottom-0 right-0 flex size-4 items-center justify-center rounded-full border border-[#888] bg-[#2a2a2a] text-xs leading-none">1</span>
        </button>
      </div>
    </div>
  );
}

/* ---------- page ---------- */

export default function App() {
  return (
    <div className="flex min-h-screen bg-black font-['Noto_Sans',sans-serif]">
      <section className="flex w-3/4 flex-col justify-center overflow-hidden bg-[#111]" aria-label="Shared screen">
        <TitleBar />
        <Tabs />
        <Ribbon />
        <Workspace />
        <HorizontalScroll />
        <StatusBar />
        <Taskbar />
      </section>
      <aside className="flex w-1/4 flex-col justify-center pl-0.5" aria-label="Participants">
        <div className="relative flex h-[270px] items-center justify-center bg-[#111] text-white">
          <div className="flex size-[120px] items-center justify-center rounded-full bg-[#007b7b] text-[64px] leading-none">D</div>
          <p className="absolute bottom-[7px] left-[13px] text-lg leading-6">Dr. Mohammad Shafiul Alam</p>
        </div>
      </aside>
    </div>
  );
}
